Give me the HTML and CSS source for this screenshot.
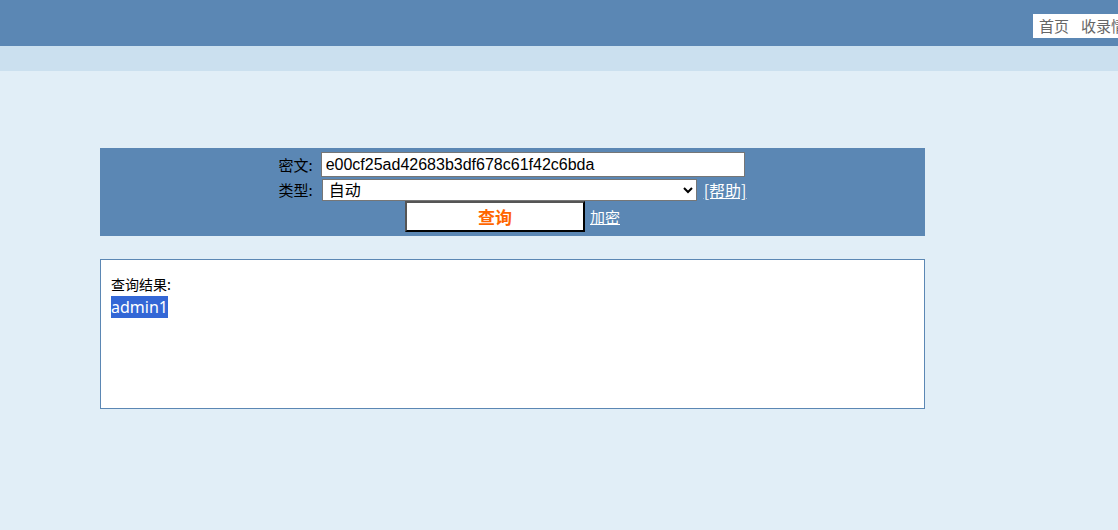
FILE: index.html
```html
<!DOCTYPE html>
<html lang="zh-CN">
  <head>
    <meta charset="UTF-8" />
    <title>md5 解密</title>
    <link rel="stylesheet" href="styles.css">
  </head>
  <body>
    <div class="header">
      <div class="logo"></div>
      <ul class="nav">
        <li><a href="#">首页</a></li>
        <li><a href="#">收录情况</a></li>
        <li><a href="#">批量破解</a></li>
      </ul>
    </div>
    <div class="subbar"></div>
    <div class="main">
      <form class="panel">
        <div class="grid">
          <label class="label" for="hash">密文:</label>
          <input id="hash" class="hash" type="text" value="e00cf25ad42683b3df678c61f42c6bda">
          <label class="label" for="type">类型:</label>
          <div class="type-row">
            <select id="type" class="type">
              <option>自动</option>
            </select>
            <a href="#" class="link help">[帮助]</a>
          </div>
          <div class="actions">
            <button type="button" class="btn">查询</button>
            <a href="#" class="link">加密</a>
          </div>
        </div>
      </form>
      <div class="result">
        <div class="result-title">查询结果:</div>
        <div class="result-text"><span class="hit">admin1</span></div>
      </div>
    </div>
  </body>
</html>
```

FILE: styles.css
```css
html, body {
  margin: 0;
  padding: 0;
}

body {
  background-color: #e1eef7;
  font-family: "Liberation Sans", "Noto Sans CJK SC", sans-serif;
  font-size: 14px;
  color: #000;
  overflow: hidden;
  height: 530px;
}

.header {
  display: flex;
  align-items: flex-start;
  height: 46px;
  background-color: #5b87b4;
  overflow: hidden;
}

.logo {
  flex: 0 0 1033px;
}

.nav {
  display: flex;
  gap: 12px;
  list-style: none;
  margin: 14px 0 0;
  padding: 0 6px;
  height: 24px;
  line-height: 24px;
  background-color: #fff;
  white-space: nowrap;
  flex-shrink: 0;
}

.nav a {
  color: #666;
  font-family: "Noto Sans CJK SC", sans-serif;
  font-size: 15px;
  text-decoration: none;
}

.subbar {
  height: 25px;
  background-color: #cbe0ef;
}

.main {
  padding: 77px 0 0 100px;
  width: 825px;
}

.panel {
  display: flex;
  justify-content: center;
  background-color: #5b87b4;
  padding: 4px 0 4px;
  margin: 0;
}

.grid {
  display: grid;
  grid-template-columns: auto auto;
  column-gap: 8px;
  row-gap: 2px;
  align-items: center;
}

.label {
  font-family: "Noto Sans CJK SC", sans-serif;
  font-size: 15px;
  color: #000;
  text-align: right;
  line-height: 18px;
}

.hash {
  width: 424px;
  height: 25px;
  box-sizing: border-box;
  border: 1px solid #767676;
  padding: 1px 4px;
  margin: 0;
  font-family: "Liberation Sans", sans-serif;
  font-size: 16px;
  color: #000;
  background: #fff;
}

.type-row {
  display: flex;
  align-items: center;
  gap: 7px;
  height: 22px;
}

.type {
  width: 375px;
  height: 22px;
  box-sizing: border-box;
  border: 1px solid #767676;
  border-radius: 0;
  padding: 0 2px;
  margin: 0 0 0 1px;
  font-family: "Liberation Sans", "Noto Sans CJK SC", sans-serif;
  font-size: 16px;
  line-height: 18px;
  background: #fff;
  color: #000;
}

.link {
  color: #fff;
  text-decoration: underline;
  font-family: "Noto Sans CJK SC", sans-serif;
  font-size: 15px;
  line-height: 20px;
}

.help {
  font-size: 16px;
}

.actions {
  grid-column: 1 / 3;
  display: flex;
  justify-content: center;
  align-items: center;
  gap: 5px;
  margin-top: -2px;
  height: 31px;
}

.btn {
  width: 180px;
  height: 31px;
  box-sizing: border-box;
  background: #fff;
  border-style: solid;
  border-width: 2px;
  border-color: #555 #000 #000 #555;
  color: #ff6600;
  font-family: "Noto Sans CJK SC", sans-serif;
  font-size: 17px;
  font-weight: bold;
  line-height: 20px;
  padding: 0;
}

.result {
  margin-top: 23px;
  height: 150px;
  box-sizing: border-box;
  background-color: #fff;
  border: 1px solid #5b87b4;
  padding: 14px 10px;
  font-family: "Noto Sans CJK SC", sans-serif;
}

.result-title {
  font-size: 14px;
  line-height: 20px;
}

.result-text {
  margin-top: 2px;
  line-height: 22px;
}

.hit {
  display: inline-block;
  background-color: #3367d6;
  color: #fff;
  font-family: "Noto Sans", sans-serif;
  font-size: 16px;
  line-height: 22px;
  vertical-align: top;
}
```
